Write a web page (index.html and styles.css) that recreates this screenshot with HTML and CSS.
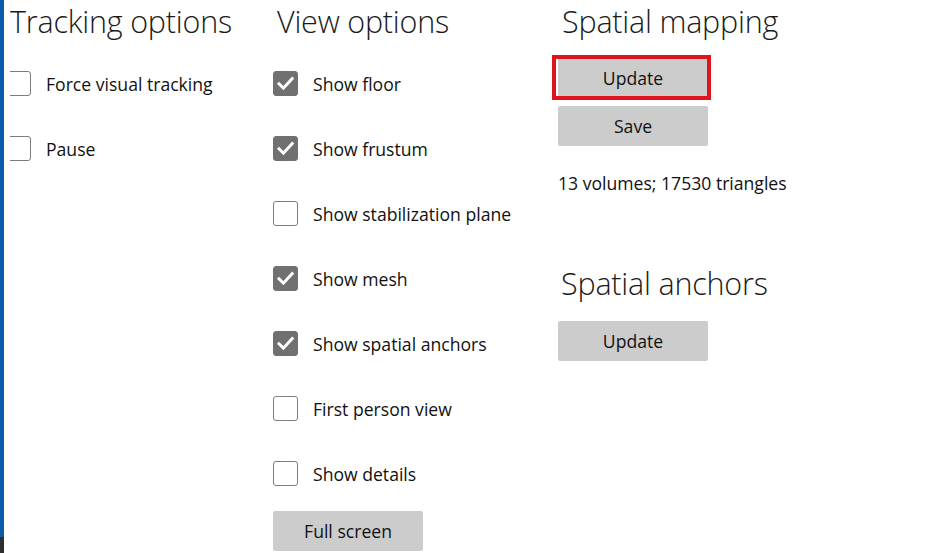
FILE: index.html
```html
<!DOCTYPE html>
<html>
<head>
<meta charset="utf-8">
<link rel="stylesheet" href="styles.css">
</head>
<body>
<div class="app">
  <div class="edge"><div class="edge-blue"></div><div class="edge-dark"></div></div>
  <div class="col col-tracking">
    <div class="col-inner">
      <h2 class="heading">Tracking options</h2>
      <label class="row"><span class="box"></span><span class="label">Force visual tracking</span></label>
      <label class="row"><span class="box"></span><span class="label">Pause</span></label>
    </div>
  </div>
  <div class="col col-view">
    <h2 class="heading">View options</h2>
    <label class="row"><span class="box checked"><svg viewBox="0 0 25 25"><path d="M6 12.8 L10.4 17.2 L19.2 7.6"/></svg></span><span class="label">Show floor</span></label>
    <label class="row"><span class="box checked"><svg viewBox="0 0 25 25"><path d="M6 12.8 L10.4 17.2 L19.2 7.6"/></svg></span><span class="label">Show frustum</span></label>
    <label class="row"><span class="box"></span><span class="label">Show stabilization plane</span></label>
    <label class="row"><span class="box checked"><svg viewBox="0 0 25 25"><path d="M6 12.8 L10.4 17.2 L19.2 7.6"/></svg></span><span class="label">Show mesh</span></label>
    <label class="row"><span class="box checked"><svg viewBox="0 0 25 25"><path d="M6 12.8 L10.4 17.2 L19.2 7.6"/></svg></span><span class="label">Show spatial anchors</span></label>
    <label class="row"><span class="box"></span><span class="label">First person view</span></label>
    <label class="row"><span class="box"></span><span class="label">Show details</span></label>
    <button class="btn btn-full">Full screen</button>
  </div>
  <div class="col col-spatial">
    <h2 class="heading">Spatial mapping</h2>
    <div class="btn-stack">
      <button class="btn focused">Update</button>
      <button class="btn">Save</button>
    </div>
    <p class="stats">13 volumes; 17530 triangles</p>
    <h2 class="heading heading-anchors">Spatial anchors</h2>
    <div class="btn-stack">
      <button class="btn">Update</button>
    </div>
  </div>
</div>
</body>
</html>
```
FILE: styles.css
```css
html, body {
  margin: 0;
  padding: 0;
  background: #ffffff;
}
body {
  width: 951px;
  height: 553px;
  overflow: hidden;
  font-family: "Open Sans", "Noto Sans", sans-serif;
  color: #111;
}
.app {
  display: flex;
  height: 553px;
}
.edge {
  width: 4px;
  display: flex;
  flex-direction: column;
  flex-shrink: 0;
}
.edge-blue {
  height: 537px;
  background: #0b5cab;
}
.edge-dark {
  flex: 1;
  background: #2e2e2e;
}
.col {
  display: flex;
  flex-direction: column;
}
.col-tracking {
  margin-left: 6px;
  width: 263px;
  overflow: hidden;
}
.col-tracking .col-inner {
  margin-left: -4px;
  display: flex;
  flex-direction: column;
}
.col-view {
  width: 285px;
}
.col-spatial {
  width: 300px;
}
.heading {
  margin: 0;
  padding-left: 4px;
  height: 51px;
  font-weight: 300;
  font-size: 30.5px;
  line-height: 42px;
  color: #1a1a1a;
  letter-spacing: -0.2px;
  white-space: nowrap;
}
.row {
  height: 65px;
  display: flex;
  align-items: center;
  gap: 15px;
}
.box {
  width: 25px;
  height: 25px;
  box-sizing: border-box;
  border: 1.5px solid #7c7c7c;
  border-radius: 3px;
  flex-shrink: 0;
  display: flex;
}
.box.checked {
  background: #707070;
  border-color: #707070;
}
.box svg {
  width: 25px;
  height: 25px;
  margin: -1.5px;
}
.box svg path {
  fill: none;
  stroke: #ffffff;
  stroke-width: 3;
  stroke-linecap: square;
}
.label {
  font-size: 17.6px;
  color: #111;
  white-space: nowrap;
}
.btn {
  width: 150px;
  height: 40px;
  border: none;
  border-radius: 2px;
  background: #cccccc;
  font-family: "Open Sans", "Noto Sans", sans-serif;
  font-size: 17.6px;
  color: #111;
  padding: 0;
}
.btn-full {
  margin-top: 5px;
}
.btn-stack {
  display: flex;
  flex-direction: column;
  gap: 8px;
  margin-top: 7px;
}
.focused {
  position: relative;
  border-radius: 0;
}
.focused::after {
  content: "";
  position: absolute;
  top: -3px;
  bottom: -2px;
  left: -6px;
  right: -3px;
  border: 4px solid #e0141e;
  pointer-events: none;
}
.stats {
  margin: 25px 0 0;
  font-size: 17.6px;
  line-height: 24px;
  color: #111;
  white-space: nowrap;
}
.heading-anchors {
  margin-top: 67px;
  height: 52px;
  padding-left: 3px;
}
```
